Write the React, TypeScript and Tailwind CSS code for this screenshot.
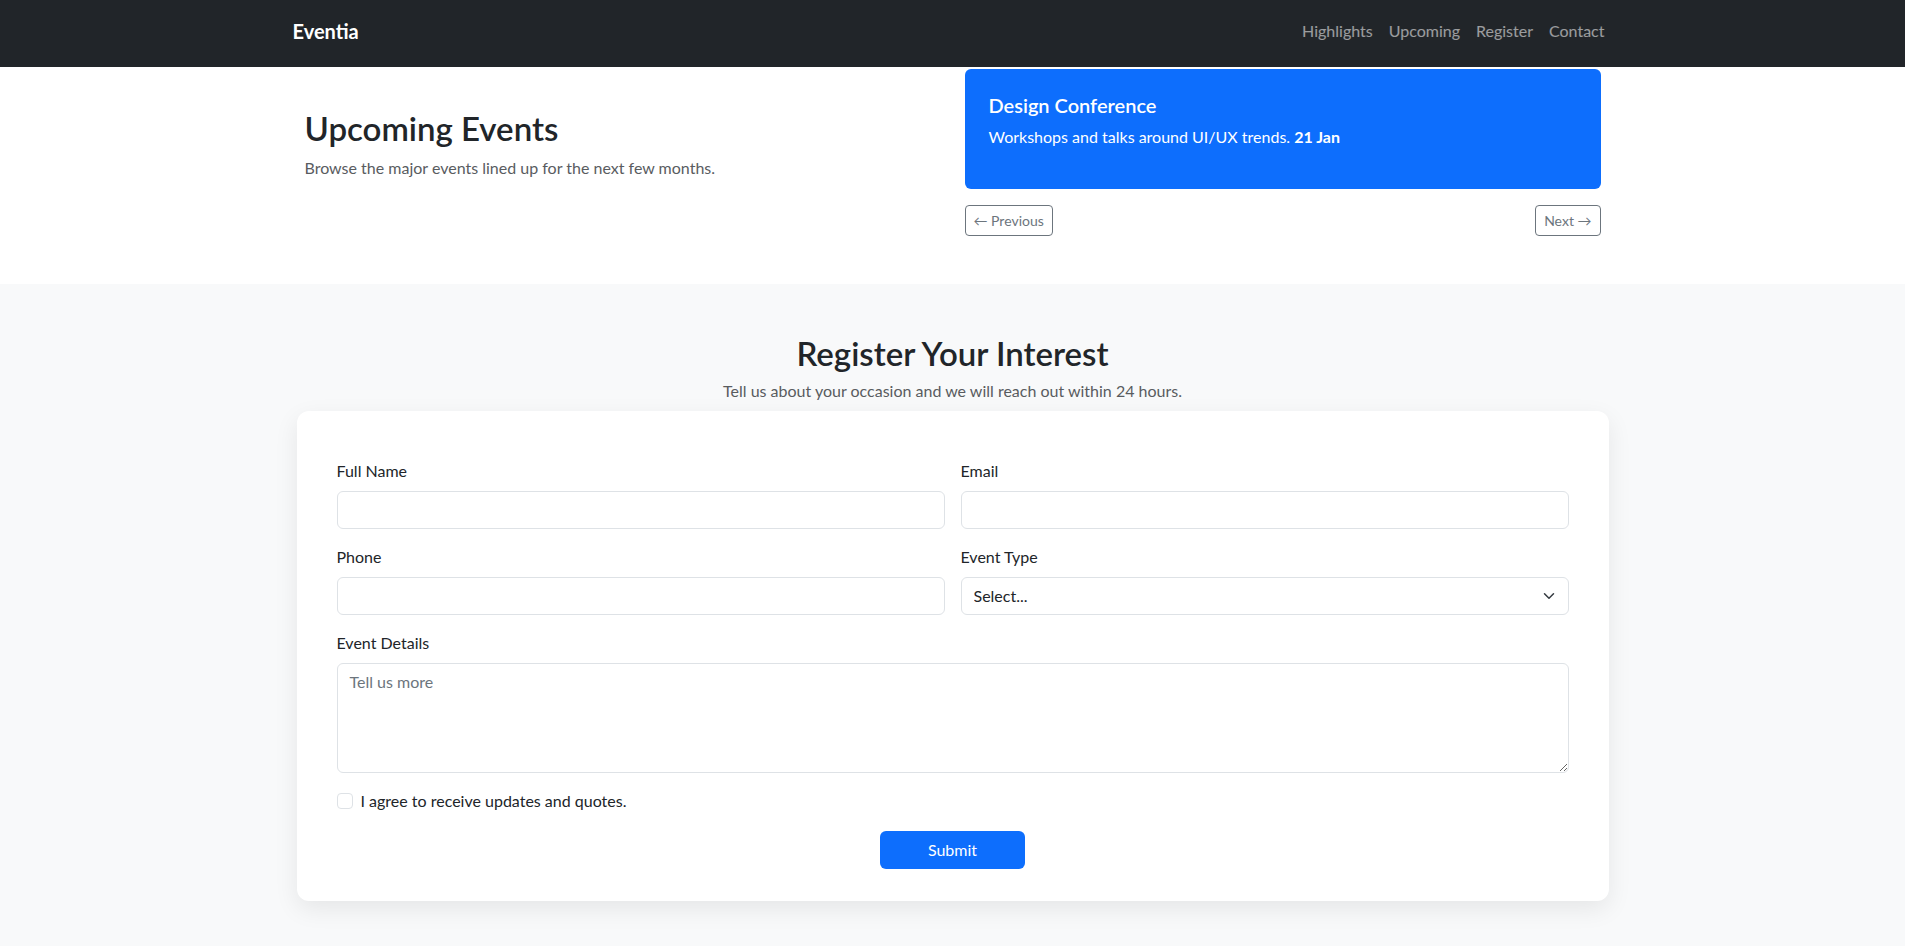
import { useState } from "react";

const navLinks = ["Highlights", "Upcoming", "Register", "Contact"];

function Field({ label, children }: { label: string; children: React.ReactNode }) {
  return (
    <div className="flex flex-col">
      <label className="mb-2 text-base leading-6 text-[#212529]">{label}</label>
      {children}
    </div>
  );
}

export default function App() {
  const [agree, setAgree] = useState(false);

  const inputCls =
    "h-[38px] w-full rounded-md border border-[#dee2e6] bg-white px-3 text-base text-[#212529] outline-none";

  return (
    <div className="min-h-screen bg-[#f8f9fa] font-['Lato','Liberation_Sans',sans-serif] text-[#212529]">
      {/* navbar */}
      <nav className="bg-[#212529]">
        <div className="mx-auto flex h-[67px] w-[1320px] items-center justify-between pb-[5px]">
          <a href="#" className="text-xl font-bold text-white">
            Eventia
          </a>
          <ul className="flex">
            {navLinks.map((l) => (
              <li key={l}>
                <a href="#" className="px-2 text-base text-white/55">
                  {l}
                </a>
              </li>
            ))}
          </ul>
        </div>
      </nav>

      {/* upcoming */}
      <section className="bg-white pt-[2px] pb-[48px]">
        <div className="mx-auto flex w-[1320px] items-center">
          <div className="w-1/2 px-3">
            <h1 className="mb-2 text-[33px] font-semibold leading-[1.2]">Upcoming Events</h1>
            <p className="mb-4 text-base leading-6 text-[#595c5f]">
              Browse the major events lined up for the next few months.
            </p>
          </div>
          <div className="w-1/2 px-3">
            <div className="rounded-md bg-[#0d6efd] p-6 text-white">
              <h5 className="mb-2 text-xl font-semibold leading-[1.2]">Design Conference</h5>
              <p className="mb-4 text-base leading-6">
                Workshops and talks around UI/UX trends. <strong className="font-bold">21 Jan</strong>
              </p>
            </div>
            <div className="mt-4 flex justify-between">
              <button className="h-[31px] rounded border border-[#6c757d] px-2 text-sm text-[#6c757d]">
                ← Previous
              </button>
              <button className="h-[31px] rounded border border-[#6c757d] px-2 text-sm text-[#6c757d]">
                Next →
              </button>
            </div>
          </div>
        </div>
      </section>

      {/* register */}
      <section className="pt-[50px] pb-12">
        <div className="text-center">
          <h2 className="mb-[5px] text-[33px] font-semibold leading-[1.2]">Register Your Interest</h2>
          <p className="mb-2 text-base leading-6 text-[#595c5f]">
            Tell us about your occasion and we will reach out within 24 hours.
          </p>
        </div>

        <div className="mx-auto w-[1312px] rounded-xl bg-white px-10 pt-[48px] pb-8 shadow-[0_0.5rem_1.5rem_rgba(0,0,0,0.08)]">
          <form className="flex flex-col gap-4" onSubmit={(e) => e.preventDefault()}>
            <div className="grid grid-cols-2 gap-4">
              <Field label="Full Name">
                <input type="text" className={inputCls} />
              </Field>
              <Field label="Email">
                <input type="email" className={inputCls} />
              </Field>
              <Field label="Phone">
                <input type="tel" className={inputCls} />
              </Field>
              <Field label="Event Type">
                <div className="relative">
                  <select className={inputCls + " appearance-none pr-10"} defaultValue="">
                    <option value="">Select...</option>
                    <option>Conference</option>
                    <option>Wedding</option>
                    <option>Corporate</option>
                  </select>
                  <svg
                    className="pointer-events-none absolute right-[14px] top-1/2 -translate-y-1/2"
                    width="12"
                    height="12"
                    viewBox="0 0 16 16"
                    fill="none"
                    stroke="#343a40"
                    strokeWidth="2"
                    strokeLinecap="round"
                    strokeLinejoin="round"
                  >
                    <path d="m2 5 6 6 6-6" />
                  </svg>
                </div>
              </Field>
            </div>

            <Field label="Event Details">
              <textarea
                rows={4}
                placeholder="Tell us more"
                className="h-[110px] w-full rounded-md border border-[#dee2e6] bg-white px-3 py-1.5 text-base leading-6 text-[#212529] outline-none placeholder:text-[#6c757d]"
              />
            </Field>

            <label className="flex items-center gap-2 text-base leading-6">
              <input
                type="checkbox"
                checked={agree}
                onChange={(e) => setAgree(e.target.checked)}
                className="h-4 w-4 appearance-none rounded border border-[#dee2e6] bg-white checked:bg-[#0d6efd]"
              />
              I agree to receive updates and quotes.
            </label>

            <div className="mt-[2px] flex justify-center">
              <button
                type="submit"
                className="h-[38px] rounded-md bg-[#0d6efd] px-12 text-base text-white"
              >
                Submit
              </button>
            </div>
          </form>
        </div>
      </section>
    </div>
  );
}
